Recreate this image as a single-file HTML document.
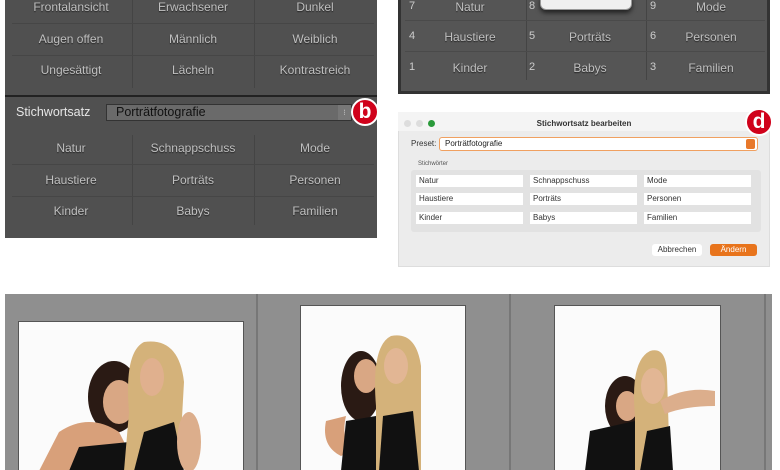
<!DOCTYPE html>
<html><head><meta charset="utf-8"><style>
*{margin:0;padding:0;box-sizing:border-box}
html,body{width:780px;height:470px;overflow:hidden}
body{background:#fff;position:relative;font-family:"Liberation Sans",sans-serif}
.a{position:absolute}
.lp{left:5px;top:0;width:372px;height:238px;background:#505050}
.cell{position:absolute;color:#c0c0c0;font-size:12px;text-align:center;text-shadow:0 1px 1px #222}
.vl{position:absolute;width:1px;background:#444}
.hl{position:absolute;height:1px;background:#464646}
.badge{position:absolute;width:28px;height:28px;border-radius:50%;background:#d0021b;border:2px solid #fff;color:#fff;font-weight:bold;font-size:21px;text-align:center;line-height:23px}
.rp{left:398px;top:0;width:372px;height:94px;background:#555;border:3px solid #333;border-top:none}
.num{position:absolute;color:#ccc;font-size:11px}
.dlg{left:398px;top:112px;width:372px;height:155px;background:#ececec;border:1px solid #ddd}
.fld{position:absolute;height:12px;background:#fff;font-size:8px;color:#333;padding-left:3px;line-height:12px}
.ph{position:absolute;background:#fbfbfb;border:1px solid #555;border-bottom:none;overflow:hidden}
</style></head><body>
<div class="a lp"></div>
<div class="vl" style="left:132px;top:0;height:88px"></div>
<div class="vl" style="left:254px;top:0;height:88px"></div>
<div class="hl" style="left:12px;top:23px;width:362px"></div>
<div class="hl" style="left:12px;top:55px;width:362px"></div>
<div class="cell" style="left:10px;top:0;width:122px">Frontalansicht</div>
<div class="cell" style="left:132px;top:0;width:122px">Erwachsener</div>
<div class="cell" style="left:254px;top:0;width:122px">Dunkel</div>
<div class="cell" style="left:10px;top:32px;width:122px">Augen offen</div>
<div class="cell" style="left:132px;top:32px;width:122px">Männlich</div>
<div class="cell" style="left:254px;top:32px;width:122px">Weiblich</div>
<div class="cell" style="left:10px;top:63px;width:122px">Ungesättigt</div>
<div class="cell" style="left:132px;top:63px;width:122px">Lächeln</div>
<div class="cell" style="left:254px;top:63px;width:122px">Kontrastreich</div>
<div class="a" style="left:5px;top:95px;width:372px;height:2px;background:#222"></div>
<div class="a" style="left:16px;top:105px;color:#e6e6e6;font-size:12.5px">Stichwortsatz</div>
<div class="a" style="left:106px;top:104px;width:246px;height:17px;background:#6a6a6a;border:1px solid #333"></div>
<div class="a" style="left:116px;top:105px;color:#111;font-size:12.5px">Porträtfotografie</div>
<div class="a" style="left:338px;top:105px;width:13px;height:15px;background:#777;color:#ccc;font-size:8px;text-align:center;line-height:15px">⁝</div>
<div class="badge" style="left:351px;top:98px">b</div>
<div class="vl" style="left:132px;top:135px;height:90px"></div>
<div class="vl" style="left:254px;top:135px;height:90px"></div>
<div class="hl" style="left:12px;top:164px;width:362px"></div>
<div class="hl" style="left:12px;top:196px;width:362px"></div>
<div class="cell" style="left:10px;top:141px;width:122px">Natur</div>
<div class="cell" style="left:132px;top:141px;width:122px">Schnappschuss</div>
<div class="cell" style="left:254px;top:141px;width:122px">Mode</div>
<div class="cell" style="left:10px;top:173px;width:122px">Haustiere</div>
<div class="cell" style="left:132px;top:173px;width:122px">Porträts</div>
<div class="cell" style="left:254px;top:173px;width:122px">Personen</div>
<div class="cell" style="left:10px;top:204px;width:122px">Kinder</div>
<div class="cell" style="left:132px;top:204px;width:122px">Babys</div>
<div class="cell" style="left:254px;top:204px;width:122px">Familien</div>

<div class="a rp"></div>
<div class="vl" style="left:526px;top:0;height:80px;background:#444"></div>
<div class="vl" style="left:646px;top:0;height:80px;background:#444"></div>
<div class="hl" style="left:405px;top:20px;width:360px;background:#4a4a4a"></div>
<div class="hl" style="left:405px;top:51px;width:360px;background:#4a4a4a"></div>
<div class="num" style="left:409px;top:0">7</div><div class="num" style="left:529px;top:0">8</div><div class="num" style="left:650px;top:0">9</div>
<div class="num" style="left:409px;top:30px">4</div><div class="num" style="left:529px;top:30px">5</div><div class="num" style="left:650px;top:30px">6</div>
<div class="num" style="left:409px;top:61px">1</div><div class="num" style="left:529px;top:61px">2</div><div class="num" style="left:650px;top:61px">3</div>
<div class="cell" style="left:415px;top:0;width:110px">Natur</div>
<div class="cell" style="left:655px;top:0;width:112px">Mode</div>
<div class="cell" style="left:415px;top:30px;width:110px">Haustiere</div>
<div class="cell" style="left:535px;top:30px;width:110px">Porträts</div>
<div class="cell" style="left:655px;top:30px;width:112px">Personen</div>
<div class="cell" style="left:415px;top:61px;width:110px">Kinder</div>
<div class="cell" style="left:535px;top:61px;width:110px">Babys</div>
<div class="cell" style="left:655px;top:61px;width:112px">Familien</div>
<div class="a" style="left:540px;top:-6px;width:92px;height:16px;background:#f0f0f0;border:1px solid #999;border-radius:6px;box-shadow:0 3px 5px rgba(0,0,0,.6)"></div>

<div class="a dlg"></div>
<div class="a" style="left:398px;top:112px;width:372px;height:19px;background:#f4f4f4"></div>
<div class="a" style="left:404px;top:120px;width:7px;height:7px;border-radius:50%;background:#ddd"></div>
<div class="a" style="left:416px;top:120px;width:7px;height:7px;border-radius:50%;background:#ddd"></div>
<div class="a" style="left:428px;top:120px;width:7px;height:7px;border-radius:50%;background:#2a9a3a"></div>
<div class="a" style="left:398px;top:119px;width:372px;text-align:center;font-size:8px;font-weight:bold;color:#333">Stichwortsatz bearbeiten</div>
<div class="badge" style="left:745px;top:108px">d</div>
<div class="a" style="left:411px;top:139px;font-size:8px;color:#333">Preset:</div>
<div class="a" style="left:439px;top:137px;width:319px;height:14px;background:#fff;border:1.5px solid #f0a060;border-radius:3px;font-size:8px;color:#222;padding-left:5px;line-height:11px">Porträtfotografie</div>
<div class="a" style="left:746px;top:139px;width:9px;height:10px;background:#e8782a;border-radius:2px"></div>
<div class="a" style="left:418px;top:161px;font-size:6px;color:#555">Stichwörter</div>
<div class="a" style="left:411px;top:170px;width:350px;height:62px;background:#e2e2e2;border-radius:3px"></div>
<div class="fld" style="left:416px;top:175px;width:107px">Natur</div>
<div class="fld" style="left:530px;top:175px;width:107px">Schnappschuss</div>
<div class="fld" style="left:644px;top:175px;width:107px">Mode</div>
<div class="fld" style="left:416px;top:193px;width:107px">Haustiere</div>
<div class="fld" style="left:530px;top:193px;width:107px">Porträts</div>
<div class="fld" style="left:644px;top:193px;width:107px">Personen</div>
<div class="fld" style="left:416px;top:212px;width:107px">Kinder</div>
<div class="fld" style="left:530px;top:212px;width:107px">Babys</div>
<div class="fld" style="left:644px;top:212px;width:107px">Familien</div>
<div class="a" style="left:652px;top:244px;width:50px;height:12px;background:#fff;border-radius:3px;font-size:8px;color:#333;text-align:center;line-height:12px">Abbrechen</div>
<div class="a" style="left:710px;top:244px;width:47px;height:12px;background:#e8741c;border-radius:3px;font-size:8px;color:#fff;text-align:center;line-height:12px">Ändern</div>

<div class="a" style="left:5px;top:294px;width:767px;height:176px;background:#8f8f8f"></div>
<div class="a" style="left:256px;top:294px;width:2px;height:176px;background:#777"></div>
<div class="a" style="left:509px;top:294px;width:2px;height:176px;background:#777"></div>
<div class="a" style="left:764px;top:294px;width:2px;height:176px;background:#777"></div>

<div class="ph" style="left:18px;top:321px;width:226px;height:149px">
<svg width="226" height="149">
<ellipse cx="95" cy="75" rx="26" ry="36" fill="#2a1a14"/>
<ellipse cx="100" cy="80" rx="16" ry="22" fill="#d9a784"/>
<path d="M20 149 L40 110 Q70 90 100 110 L120 149Z" fill="#d8a07a"/>
<path d="M50 149 L60 125 L110 120 L120 149Z" fill="#111"/>
<path d="M125 20 Q105 30 110 90 L105 149 L160 149 L165 60 Q160 15 125 20Z" fill="#d4b27a"/>
<ellipse cx="133" cy="55" rx="12" ry="19" fill="#e0b08e"/>
<path d="M115 149 L125 110 L155 100 L165 149Z" fill="#111"/>
<ellipse cx="170" cy="120" rx="12" ry="30" fill="#dcae8c"/>
</svg></div>

<div class="ph" style="left:300px;top:305px;width:166px;height:165px">
<svg width="166" height="165">
<ellipse cx="60" cy="80" rx="20" ry="35" fill="#2a1a14"/>
<ellipse cx="65" cy="70" rx="12" ry="17" fill="#d9a784"/>
<path d="M25 115 Q20 140 40 150 L50 145 Q40 130 45 110Z" fill="#d8a07a"/>
<path d="M40 165 L45 115 L75 110 L80 165Z" fill="#111"/>
<path d="M90 30 Q70 40 75 100 L75 165 L120 165 L120 60 Q115 25 90 30Z" fill="#d4b27a"/>
<ellipse cx="95" cy="60" rx="12" ry="18" fill="#e2b694"/>
<path d="M78 165 L82 110 L112 105 L118 165Z" fill="#111"/>
</svg></div>

<div class="ph" style="left:554px;top:305px;width:167px;height:165px">
<svg width="167" height="165">
<ellipse cx="70" cy="100" rx="20" ry="30" fill="#2a1a14"/>
<ellipse cx="72" cy="100" rx="11" ry="15" fill="#d9a784"/>
<path d="M30 165 L35 125 L80 115 L85 165Z" fill="#111"/>
<path d="M95 45 Q75 55 80 110 L80 165 L115 165 L112 70 Q112 40 95 45Z" fill="#d4b27a"/>
<ellipse cx="98" cy="80" rx="12" ry="18" fill="#e2b694"/>
<path d="M105 95 Q130 80 160 85 L160 100 Q130 100 110 108Z" fill="#dcae8c"/>
<path d="M85 165 L92 125 L115 120 L118 165Z" fill="#111"/>
</svg></div>
</body></html>
